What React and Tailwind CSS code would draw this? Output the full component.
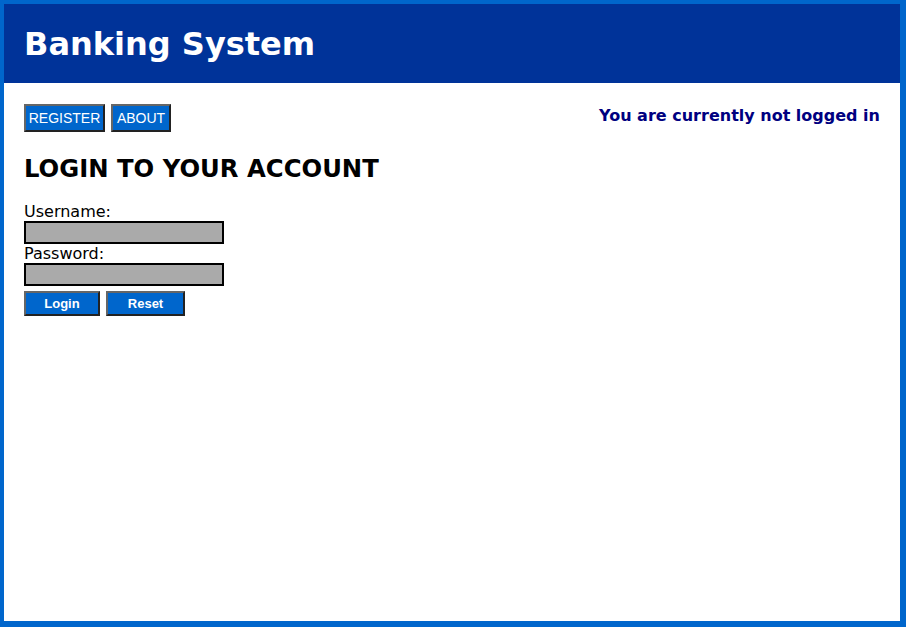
import { useState } from 'react';

const navBtn =
  "h-[28px] bg-[#0066cc] text-white text-[14px] leading-none border-2 border-t-[#666] border-l-[#666] border-b-[#222] border-r-[#222] font-['Liberation_Sans',Arial,sans-serif]";

const formBtn =
  "h-[25px] bg-[#0066cc] text-white text-[13px] font-bold leading-none border-2 border-t-[#666] border-l-[#666] border-b-[#222] border-r-[#222] font-['Liberation_Sans',Arial,sans-serif]";

const App = () => {
  const [username, setUsername] = useState('');
  const [password, setPassword] = useState('');

  return (
    <div className="w-[906px] h-[627px] bg-white border-t-4 border-l-4 border-r-[6px] border-b-[6px] border-[#0066cc] font-['DejaVu_Sans',Verdana,sans-serif] text-black flex flex-col">
      {/* Header */}
      <header className="h-[79px] bg-[#003399] flex items-center px-[20px]">
        <h1 className="text-[32px] font-bold text-white leading-none pt-[1px]">Banking System</h1>
      </header>

      <main className="px-[20px] pt-[21px]">
        {/* Nav + status */}
        <div className="flex items-start justify-between">
          <div className="flex gap-[6px]">
            <button className={`${navBtn} w-[81px]`}>REGISTER</button>
            <button className={`${navBtn} w-[60px]`}>ABOUT</button>
          </div>
          <p className="text-[16px] font-bold text-[#000080] leading-[18px] pt-[3px]">You are currently not logged in</p>
        </div>

        <h2 className="text-[24.3px] font-bold mt-[22px] leading-[30px]">LOGIN TO YOUR ACCOUNT</h2>

        <form className="mt-[18px]" onSubmit={(e) => e.preventDefault()}>
          <label className="block text-[16px] leading-[19px]">Username:</label>
          <input
            type="text"
            value={username}
            onChange={(e) => setUsername(e.target.value)}
            className="block w-[200px] h-[23px] bg-[#aaaaaa] border-2 border-black outline-none"
          />
          <label className="block text-[16px] leading-[19px]">Password:</label>
          <input
            type="password"
            value={password}
            onChange={(e) => setPassword(e.target.value)}
            className="block w-[200px] h-[23px] bg-[#aaaaaa] border-2 border-black outline-none"
          />
          <div className="flex gap-[6px] mt-[5px]">
            <button type="submit" className={`${formBtn} w-[76px]`}>Login</button>
            <button
              type="reset"
              className={`${formBtn} w-[79px]`}
              onClick={() => { setUsername(''); setPassword(''); }}
            >
              Reset
            </button>
          </div>
        </form>
      </main>
    </div>
  );
};

export default App;
